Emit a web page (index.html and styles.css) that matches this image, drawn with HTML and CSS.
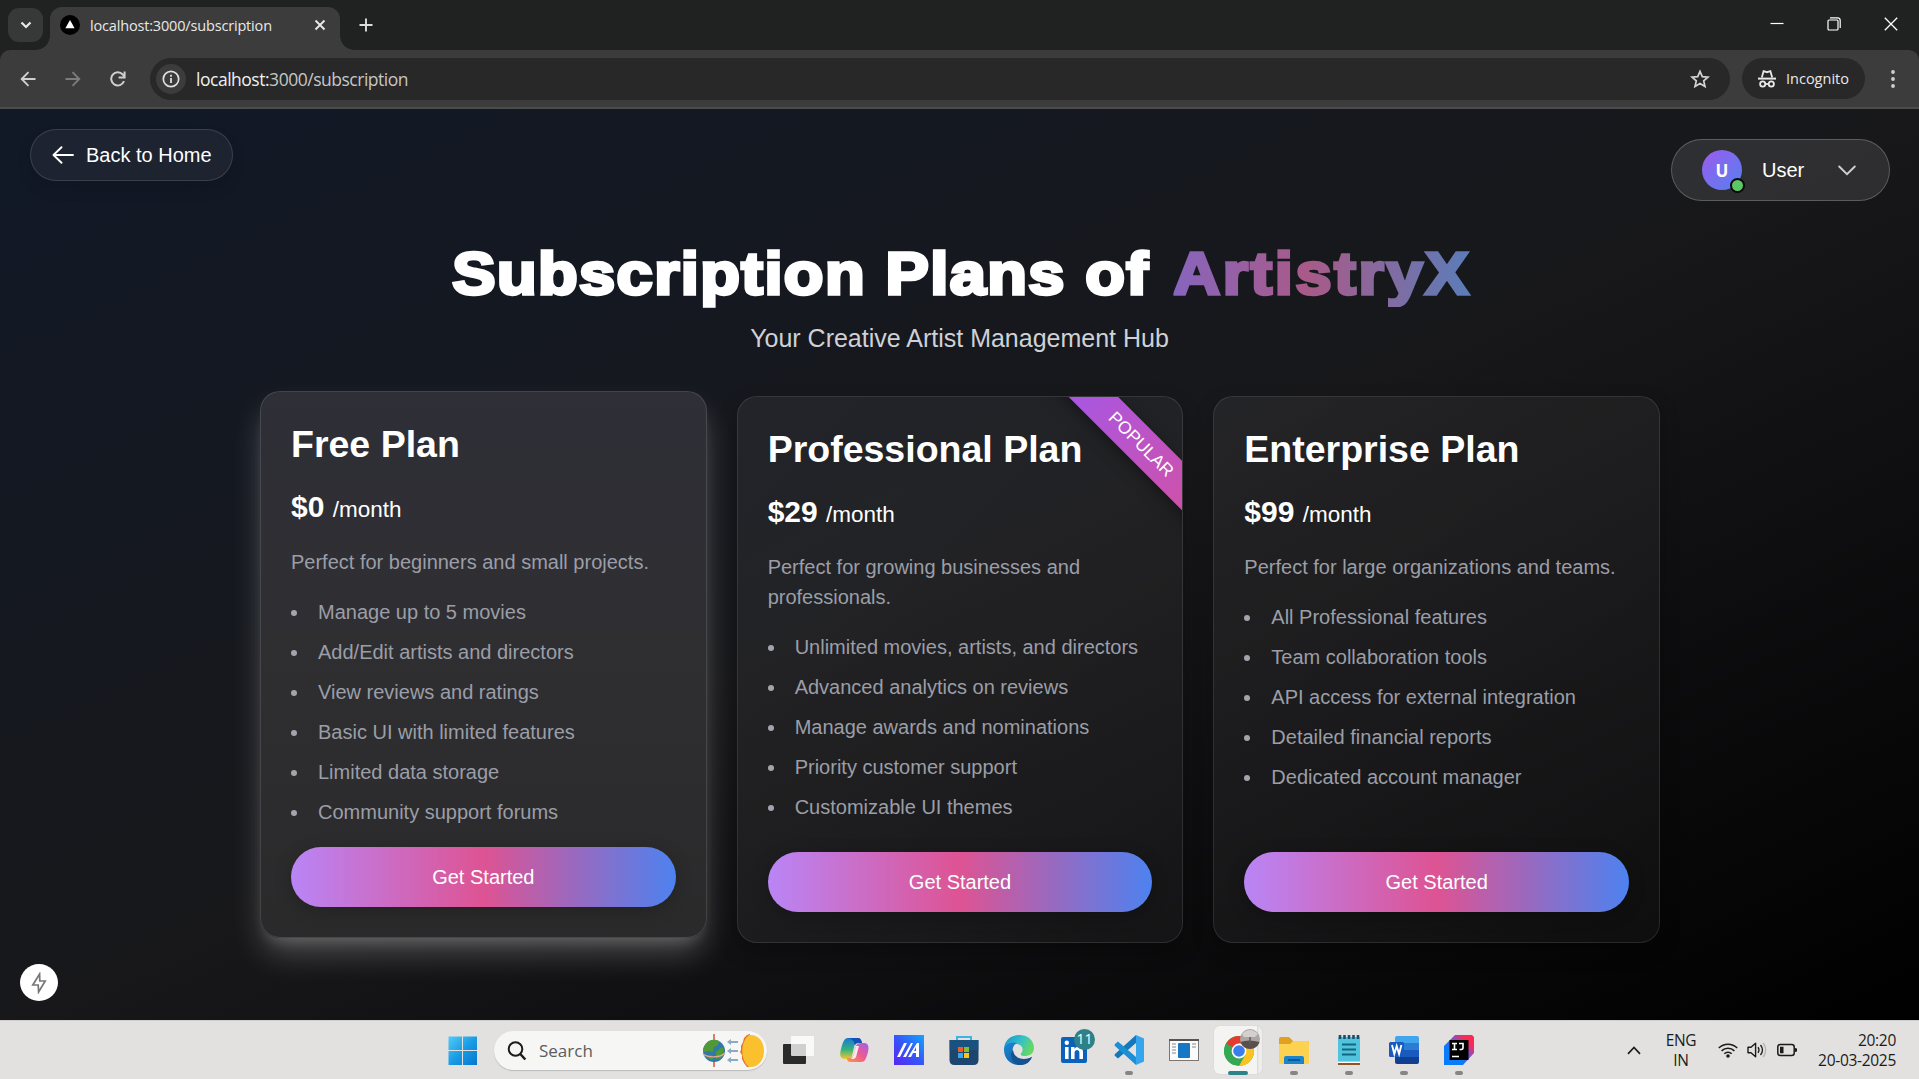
FILE: index.html
```html
<!DOCTYPE html>
<html lang="en">
<head>
<meta charset="utf-8">
<title>Subscription Plans of ArtistryX</title>
<link rel="stylesheet" href="styles.css">
</head>
<body>
<header class="tabstrip">
  <div class="tab-search"><svg width="12" height="8" viewBox="0 0 12 8"><path d="M1.5 1.5 6 6l4.500-4.500" fill="none" stroke="#e8e8e8" stroke-width="2.200"/></svg></div>
  <div class="tab">
    <svg class="favicon" width="20" height="20" viewBox="0 0 20 20"><circle cx="10" cy="10" r="10" fill="#000"/><path d="M10 5l4.600 8.300H5.400z" fill="#fff"/></svg>
    <span class="tab-title">localhost:3000/subscription</span>
    <svg class="tab-close" width="12" height="12" viewBox="0 0 12 12"><path d="M1.500 1.500l9 9M10.500 1.500l-9 9" stroke="#e8e8e8" stroke-width="1.900"/></svg>
  </div>
  <svg class="new-tab" width="14" height="14" viewBox="0 0 14 14"><path d="M7 .5v13M.5 7h13" stroke="#dcdcdc" stroke-width="1.900"/></svg>
  <div class="window-controls">
    <svg width="14" height="14" viewBox="0 0 14 14"><path d="M.5 6.500h13" stroke="#fff" stroke-width="1.200"/></svg>
    <svg width="14" height="14" viewBox="0 0 14 14"><rect x="1" y="3" width="10" height="10" rx="1" fill="none" stroke="#fff" stroke-width="1.200"/><path d="M3 .8h7.500a2.700 2.700 0 0 1 2.700 2.700V11" fill="none" stroke="#fff" stroke-width="1.200"/></svg>
    <svg width="14" height="14" viewBox="0 0 14 14"><path d="M.8.8l12.400 12.400M13.200.8L.8 13.200" stroke="#fff" stroke-width="1.300"/></svg>
  </div>
</header>
<nav class="toolbar">
  <svg class="nav-icon" width="16" height="16" viewBox="0 0 16 16"><path d="M15.500 8H2M8.500 1.200L1.700 8l6.800 6.800" fill="none" stroke="#cfcfcf" stroke-width="1.900"/></svg>
  <svg class="nav-icon" width="16" height="16" viewBox="0 0 16 16"><path d="M.5 8H14M7.500 1.200L14.300 8l-6.800 6.800" fill="none" stroke="#7c7c7c" stroke-width="1.900"/></svg>
  <svg class="nav-icon" width="16" height="16" viewBox="0 0 16 16"><path d="M14 10.200A6.600 6.600 0 1 1 12.800 3.500L14.500 5.500" fill="none" stroke="#cfcfcf" stroke-width="2"/><path d="M14.600.5v6H8.600" fill="none" stroke="#cfcfcf" stroke-width="2"/></svg>
  <div class="omnibox">
    <span class="site-info"><svg width="18" height="18" viewBox="0 0 18 18"><circle cx="9" cy="9" r="7.700" fill="none" stroke="#e0e0e0" stroke-width="1.700"/><path d="M9 8v5M9 4.800v2" stroke="#e0e0e0" stroke-width="1.800"/></svg></span>
    <span class="url"><b>localhost:</b>3000/subscription</span>
    <svg class="star" width="20" height="20" viewBox="0 0 20 20"><path d="M10 2.300l2.300 5.300 5.700.5-4.300 3.800 1.300 5.700-5-3-5 3 1.300-5.700L2 8.100l5.700-.5z" fill="none" stroke="#d4d4d4" stroke-width="1.700"/></svg>
  </div>
  <div class="incognito">
    <svg width="18" height="18" viewBox="0 0 18 18"><path d="M3.800 7.500L5.600 1.200 9 2.200l3.400-1L14.200 7.500" fill="none" stroke="#e8e8e8" stroke-width="1.800"/><path d="M0 8.600h18" stroke="#e8e8e8" stroke-width="2"/><g fill="none" stroke="#e8e8e8" stroke-width="1.800"><circle cx="4.700" cy="14" r="2.600"/><circle cx="13.300" cy="14" r="2.600"/><path d="M7.200 14h3.600"/></g></svg>
    <span>Incognito</span>
  </div>
  <svg class="kebab" width="4" height="18" viewBox="0 0 4 18"><g fill="#d0d0d0"><circle cx="2" cy="2" r="1.900"/><circle cx="2" cy="9" r="1.900"/><circle cx="2" cy="16" r="1.900"/></g></svg>
</nav>

<main class="page">
  <div class="page-bar">
    <a class="back"><svg width="22" height="18" viewBox="0 0 22 18"><path d="M21 9H2M9.500 1.200L1.500 9l8 7.800" fill="none" stroke="#fff" stroke-width="1.900" stroke-linecap="round" stroke-linejoin="round"/></svg>Back to Home</a>
    <div class="user">
      <span class="avatar">U<i class="online"></i></span>
      <span class="user-name">User</span>
      <svg width="18" height="11" viewBox="0 0 18 11"><path d="M1.200 1.500L9 9.200l7.800-7.700" fill="none" stroke="#d0d0d2" stroke-width="1.900" stroke-linecap="round"/></svg>
    </div>
  </div>
  <h1>Subscription Plans of <span class="brand">ArtistryX</span></h1>
  <p class="tagline">Your Creative Artist Management Hub</p>

  <section class="plans">
    <article class="plan plan-active">
      <h2>Free Plan</h2>
      <p class="price">$0 <span>/month</span></p>
      <p class="about">Perfect for beginners and small projects.</p>
      <ul>
        <li>Manage up to 5 movies</li><li>Add/Edit artists and directors</li><li>View reviews and ratings</li><li>Basic UI with limited features</li><li>Limited data storage</li><li>Community support forums</li>
      </ul>
      <button>Get Started</button>
    </article>
    <article class="plan">
      <div class="ribbon-clip"><span class="ribbon">POPULAR</span></div>
      <h2>Professional Plan</h2>
      <p class="price">$29 <span>/month</span></p>
      <p class="about">Perfect for growing businesses and professionals.</p>
      <ul>
        <li>Unlimited movies, artists, and directors</li><li>Advanced analytics on reviews</li><li>Manage awards and nominations</li><li>Priority customer support</li><li>Customizable UI themes</li>
      </ul>
      <button>Get Started</button>
    </article>
    <article class="plan">
      <h2>Enterprise Plan</h2>
      <p class="price">$99 <span>/month</span></p>
      <p class="about">Perfect for large organizations and teams.</p>
      <ul>
        <li>All Professional features</li><li>Team collaboration tools</li><li>API access for external integration</li><li>Detailed financial reports</li><li>Dedicated account manager</li>
      </ul>
      <button>Get Started</button>
    </article>
  </section>
  <div class="dev-badge"><svg width="16" height="22" viewBox="0 0 16 22"><path d="M8.600 2L1.800 13h5.400l.4 7L14.200 9H8.800z" fill="none" stroke="#777" stroke-width="1.700"/></svg></div>
</main>

<footer class="taskbar">
  <svg class="start" width="30" height="30" viewBox="0 0 30 30"><defs><linearGradient id="win" gradientUnits="userSpaceOnUse" x1="0" y1="0" x2="30" y2="30"><stop offset="0" stop-color="#55cdf8"/><stop offset=".5" stop-color="#199be4"/><stop offset="1" stop-color="#0673cf"/></linearGradient></defs><path fill="url(#win)" d="M.5.5H14v13.500H.5zM15 .5h14v13.500H15zM.5 15H14v14H.5zM15 15h14v14H15z"/></svg>
  <div class="search">
    <svg width="20" height="20" viewBox="0 0 20 20"><circle cx="8.500" cy="8" r="6.800" fill="none" stroke="#1d1d1d" stroke-width="2"/><path d="M13.300 13l5 5.500" stroke="#1d1d1d" stroke-width="2.500"/></svg>
    <span>Search</span>
    <svg class="doodle" width="64" height="36" viewBox="0 0 64 36">
      <path d="M12 1v33" stroke="#d6604a" stroke-width="1.600"/><circle cx="12" cy="18" r="11" fill="#2f78a8"/><path d="M4 11c3-5 9-5 13-3l-1 4-4 2-1 5-5-1-5 1c0-3 1-6 3-8zM14 19l6-5c3 3 2 8-1 11l-5 1zM4 23l6-1 1 5c-3 0-5-2-7-4z" fill="#4f9a34"/><path d="M1 21c5 4 17 4 22-1" fill="none" stroke="#e9a58f" stroke-width="1.400"/>
      <g fill="#8ba8c4"><path d="M25 9l4-3v2h7v2h-7v2zM25 18l4-3v2h7v2h-7v2zM25 27l4-3v2h7v2h-7v2z"/></g>
      <path d="M45 2l-3 3-1 4-2 4 0 4-1 2 2 3 0 4 2 4 3 4h3V1z" fill="#e4702a"/><path d="M47 2c20-2 20 34 0 32C38 27 38 9 47 2z" fill="#fbc02d"/>
    </svg>
  </div>
  <div class="apps">
    <div class="app"><svg width="44" height="48" viewBox="0 0 44 48"><rect x="6" y="18" width="23" height="20" rx="1" fill="#2a2a2a"/><rect x="14" y="10" width="23" height="20" rx="1" fill="#fff" fill-opacity=".78"/></svg></div>
    <div class="app"><svg width="44" height="48" viewBox="0 0 44 48"><defs><linearGradient id="cpa" x1="0" y1="0" x2="0" y2="1"><stop offset="0" stop-color="#1879d8"/><stop offset=".55" stop-color="#35b37c"/><stop offset="1" stop-color="#f4c62c"/></linearGradient><linearGradient id="cpb" x1="1" y1="0" x2="0" y2="1"><stop offset="0" stop-color="#a25fe6"/><stop offset=".5" stop-color="#ed5a92"/><stop offset="1" stop-color="#fb9a3c"/></linearGradient></defs><path d="M16 12h10q3 0 4 5h-4q-3 0-4 4l-2 9q-1 3-3 3h-4c-6 0-5-6-4-10 2-7 3-11 7-11z" fill="url(#cpa)"/><path d="M29 17h3c5 0 5 5 4 9-2 7-3 10-7 10H18q-3 0-3-4h3q3 0 4-4l2-8q1-3 5-3z" fill="url(#cpb)"/><path d="M16 12h10q3 0 4 5h-4q-2 0-3 2-1-6-7-7z" fill="#1451b5"/><path d="M24 20h3l-3 11q-1 2-3 2h-2q2-1 3-5z" fill="#fff" opacity=".85"/></svg></div>
    <div class="app"><svg width="44" height="48" viewBox="0 0 44 48"><defs><linearGradient id="asus" x1="0" y1="1" x2="1" y2="0"><stop offset="0" stop-color="#5a25f0"/><stop offset=".5" stop-color="#3557f8"/><stop offset="1" stop-color="#12a5ff"/></linearGradient></defs><path d="M7 9h30v30H7z" fill="url(#asus)"/><path d="M10 31l7-14h3l-7 14zM16 31l8-14h2l-7 14zM21 31l9-14h2v14h-3v-4h-3l-2 4zM27 25h2v-4z" fill="#fff"/></svg></div>
    <div class="app"><svg width="44" height="48" viewBox="0 0 44 48"><path d="M15 15v-4h14v4" fill="none" stroke="#3db5e4" stroke-width="2"/><path d="M7.500 14h29v20q0 5-5 5h-19q-5 0-5-5z" fill="#1d466f"/><path d="M7.500 14h29v10h-29z" fill="#175a8b" opacity=".6"/><path d="M16 21h5v5h-5z" fill="#f05a2c"/><path d="M22 21h5v5h-5z" fill="#86bc2f"/><path d="M16 27h5v5h-5z" fill="#35a8e8"/><path d="M22 27h5v5h-5z" fill="#fbc21b"/></svg></div>
    <div class="app"><svg width="44" height="48" viewBox="0 0 44 48"><defs><linearGradient id="eda" x1="0" y1="0" x2="1" y2=".4"><stop offset="0" stop-color="#168fd4"/><stop offset=".6" stop-color="#35c2c6"/><stop offset="1" stop-color="#65d864"/></linearGradient><linearGradient id="edb" x1="0" y1="0" x2="1" y2="1"><stop offset="0" stop-color="#1a8ad6"/><stop offset="1" stop-color="#134b92"/></linearGradient></defs><path d="M7 23C8 4 37 5 37 22c0 6-5 8-9 8-5 0-5-2-3-4 2-4-1-8-6-8-6 0-11 3-12 8z" fill="url(#eda)"/><path d="M7 24c0-6 8-9 13-7-4 2-5 6-4 10 2 6 10 9 19 4-3 6-8 8-13 8-9 0-15-7-15-15z" fill="url(#edb)"/><path d="M16 24c-5 5 0 15 8 15 5 0 9-3 11-8-8 4-18 2-19-7z" fill="#145291"/></svg></div>
    <div class="app linkedin"><svg width="44" height="48" viewBox="0 0 44 48"><rect x="9" y="11" width="26" height="26" rx="2" fill="#0c61bb"/><circle cx="14.800" cy="16.800" r="2.200" fill="#fff"/><path d="M13 21h3.600v12H13zM19 21h3.400v1.800c2-3.300 8.600-3 8.600 3.200v7h-3.600v-6.500c0-3.500-4.800-3.400-4.800 0V33H19z" fill="#fff"/></svg><span class="badge">11</span></div>
    <div class="app open"><svg width="44" height="48" viewBox="0 0 44 48"><path d="M29 9v8L11 32.500 8 30q-1-1 0-2z" fill="#1478ba"/><path d="M29 39v-8L11 15.500 8 18q-1 1 0 2z" fill="#1c8fd4"/><path d="M29 9l8 3.500v23L29 39z" fill="#35a6ed"/></svg></div>
    <div class="app"><svg width="44" height="48" viewBox="0 0 44 48"><rect x="7.500" y="13.500" width="29" height="21" fill="#fbfbfb" stroke="#777" /><path d="M7 14h30" stroke="#555" stroke-width="2"/><rect x="16" y="17" width="12" height="15" rx="1" fill="#1678c4"/><path d="M10 18h4M10 21h4M10 24h4M10 27h4M30 18h4M30 21h4" stroke="#888"/></svg></div>
    <div class="app current"><svg width="44" height="48" viewBox="0 0 44 48"><circle cx="22" cy="25" r="15" fill="#35a853"/><path d="M22 25L9 17.500a15 15 0 0 1 26 0z" fill="#e33b2e"/><path d="M22 17.500h13A15 15 0 0 1 22 40l6.500-11.500z" fill="#fcc31e"/><path d="M9 17.500L15.500 28.500 22 32l-5 7A15 15 0 0 1 9 17.500z" fill="#35a853"/><circle cx="22" cy="25" r="7.400" fill="#fff"/><circle cx="22" cy="25" r="5.800" fill="#3b7ded"/><circle cx="33" cy="13" r="10" fill="#aaa7a6"/><path d="M23.500 16q8-3 19 0a10 10 0 0 1-19 0z" fill="#59504c"/><path d="M25 8q8-8 16 0l-3 3H27z" fill="#d3d0ce"/><path d="M33 11v7" stroke="#645b58" stroke-width="1.500"/></svg></div>
    <div class="app open"><svg width="44" height="48" viewBox="0 0 44 48"><path d="M7 13q0-2 2-2h8l4 4h14q2 0 2 2v20H7z" fill="#e0a020"/><path d="M7 18h11l3-3h14q2 0 2 2v19q0 2-2 2H9q-2 0-2-2z" fill="#fdd250"/><path d="M12 38v-6q0-2 2-2h16q2 0 2 2v6z" fill="#1a85cc"/><path d="M16 34h12" stroke="#0b599a" stroke-width="2"/></svg></div>
    <div class="app open"><svg width="44" height="48" viewBox="0 0 44 48"><path d="M11 34h22v5H11z" fill="#8b5524"/><rect x="11" y="11" width="22" height="26" rx="1" fill="#4fc4dc"/><path d="M13 9v4M17.500 9v4M22 9v4M26.500 9v4M31 9v4" stroke="#16506e" stroke-width="2.600"/><path d="M15 18.500h14M15 23.500h14M15 28.500h14" stroke="#15657f" stroke-width="1.800"/><path d="M11 36.300h22" stroke="#fff" stroke-width="1.400"/></svg></div>
    <div class="app open"><svg width="44" height="48" viewBox="0 0 44 48"><path d="M13 12q0-2 2-2h20q2 0 2 2v6H13z" fill="#41a5ee"/><path d="M13 17h24v7H13z" fill="#2b7cd3"/><path d="M13 24h24v7H13z" fill="#185abd"/><path d="M13 31h24v5q0 2-2 2H15q-2 0-2-2z" fill="#103f91"/><rect x="7" y="16" width="15" height="15" rx="1.500" fill="#185abd"/><path d="M10 19l2.300 9 2.400-8 2.400 8L19.400 19" fill="none" stroke="#fff" stroke-width="1.900"/></svg></div>
    <div class="app open"><svg width="44" height="48" viewBox="0 0 44 48"><defs><linearGradient id="ij" x1="0" y1="1" x2="1" y2="0"><stop offset=".35" stop-color="#087cfa"/><stop offset=".55" stop-color="#6b57d8"/><stop offset=".8" stop-color="#fe2857"/></linearGradient></defs><path d="M7 20L18 9h17l2 2v16L26 39H7z" fill="url(#ij)"/><rect x="12.500" y="14" width="19" height="20" fill="#000"/><path d="M15 17.500h5M17.500 17.500v6M15 23.500h5M22 17.500h4v4.500q0 1.700-3.500 1.500M15 30.500h7" fill="none" stroke="#fff" stroke-width="1.600"/></svg></div>
  </div>
  <div class="tray">
    <svg width="14" height="9" viewBox="0 0 14 9"><path d="M1 7.800L7 1.500l6 6.300" fill="none" stroke="#1b1b1b" stroke-width="1.700"/></svg>
    <div class="lang">ENG<br>IN</div>
    <svg class="wifi" width="20" height="16" viewBox="0 0 20 16"><g fill="none" stroke="#1b1b1b" stroke-width="1.500"><path d="M.8 6a13 13 0 0 1 18.400 0M3.600 8.900a9 9 0 0 1 12.800 0M6.300 11.700a5.200 5.200 0 0 1 7.400 0"/></g><circle cx="10" cy="14" r="1.800" fill="#1b1b1b"/></svg>
    <svg class="volume" width="20" height="16" viewBox="0 0 20 16"><path d="M1 5.200h3L8.600 1.300v13.400L4 10.800H1z" fill="none" stroke="#1b1b1b" stroke-width="1.400" stroke-linejoin="round"/><path d="M11 5.200q2 2.800 0 5.600M13.500 3q4 5 0 10" fill="none" stroke="#1b1b1b" stroke-width="1.300"/><path d="M16.200 1q5 7 0 14" fill="none" stroke="#b5b5b5" stroke-width="1.300"/></svg>
    <svg class="battery" width="21" height="14" viewBox="0 0 21 14"><rect x=".8" y="1.500" width="16.400" height="11" rx="2.500" fill="none" stroke="#1b1b1b" stroke-width="1.500"/><path d="M3 3.700h3.500v6.600H3zM18 5l2 .5v3L18 9z" fill="#1b1b1b"/></svg>
    <div class="clock">20:20<br>20-03-2025</div>
  </div>
</footer>
</body>
</html>
```

FILE: styles.css
```css
* { box-sizing: border-box; }
body { margin: 0; width: 1919px; height: 1079px; overflow: hidden; display: flex; flex-direction: column; background: #202221; font-family: "Liberation Sans", Arial, sans-serif; }
svg { display: block; flex: none; }
h1, h2, p, ul { margin: 0; padding: 0; }

/* Browser window */
.tabstrip, .toolbar, .taskbar { font-family: "Open Sans", "Noto Sans", sans-serif; }
.tabstrip { height: 50px; flex: none; display: flex; align-items: flex-start; background: #202221; padding-left: 8px; }
.tab-search { width: 35px; height: 34px; margin-top: 8px; border-radius: 11px; background: #373838; display: grid; place-items: center; }
.tab { position: relative; width: 290px; height: 43px; margin: 7px 0 0 7px; padding: 0 14px 7px 10px; border-radius: 12px 12px 0 0; background: #3c3c3c; display: flex; align-items: center; }
.tab::before, .tab::after { content: ""; position: absolute; bottom: 0; width: 14px; height: 14px; }
.tab::before { left: -14px; background: radial-gradient(circle at 0 0, transparent 13.500px, #3c3c3c 14px); }
.tab::after { right: -14px; background: radial-gradient(circle at 100% 0, transparent 13.500px, #3c3c3c 14px); }
.tab-title { margin-left: 10px; font-size: 14.500px; color: #e8e8e8; letter-spacing: -.17px; white-space: nowrap; }
.tab-close { margin-left: auto; }
.new-tab { margin: 18px 0 0 19px; }
.window-controls { margin: 17px 21px 0 auto; display: flex; gap: 43px; }
.toolbar { height: 59px; flex: none; display: flex; align-items: center; background: #3c3c3c; border-bottom: 2px solid #4b4b4b; padding: 0 24px 0 20px; border-radius: 10px 10px 0 0; }
.nav-icon { margin-right: 29px; }
.omnibox { flex: 1; height: 42px; border-radius: 21px; background: #282828; display: flex; align-items: center; padding: 0 20px 0 6px; margin-left: -5px; }
.site-info { width: 30px; height: 30px; border-radius: 50%; background: #3c3c3c; display: grid; place-items: center; }
.url { margin-left: 10px; font-size: 17.500px; color: #c6c6c6; letter-spacing: -.48px; }
.url b { font-weight: 400; color: #efefef; }
.star { margin-left: auto; }
.incognito { width: 123px; height: 41px; margin: 0 26px 0 12px; border-radius: 21px; background: #282828; display: flex; align-items: center; padding-left: 16px; gap: 10px; font-size: 14.500px; color: #e8e8e8; }

/* Subscription page */
.page { position: relative; height: 911px; flex: none; background: linear-gradient(to bottom right, #111827, #18181b 50%, #000); color: #fff; }
.page-bar { height: 92px; padding: 20px 29px 0 30px; display: flex; justify-content: space-between; align-items: flex-start; }
.back { width: 203px; height: 52px; border: 1px solid rgba(255,255,255,.13); border-radius: 26px; background: rgba(255,255,255,.05); display: flex; align-items: center; gap: 12px; padding-left: 21px; font-size: 20px; box-shadow: 0 8px 15px rgba(0,0,0,.1); }
.user { width: 219px; height: 62px; margin-top: 10px; border: 1px solid rgba(255,255,255,.22); border-radius: 31px; background: rgba(255,255,255,.1); display: flex; align-items: center; padding: 0 33px 0 30px; font-size: 20px; }
.avatar { position: relative; width: 40px; height: 40px; border-radius: 50%; background: linear-gradient(135deg, #9b5cf0, #5580ee); display: grid; place-items: center; font: 700 17px "Open Sans", sans-serif; }
.online { position: absolute; right: -3px; bottom: -3px; width: 15px; height: 15px; border: 2px solid #0a0a0a; border-radius: 50%; background: #5cc864; }
.user-name { margin: 0 auto 0 20px; }
h1 { width: 1400px; height: 107px; margin: 0 auto; padding: 28px 0 0 3px; text-align: center; white-space: nowrap; font: 700 59px/90px "Liberation Sans", Arial, sans-serif; letter-spacing: 1.300px; -webkit-text-stroke: 3.400px #fff; transform: scaleX(1.1); }
.brand { margin-left: 4px; letter-spacing: 2.400px; background: linear-gradient(90deg, #8765bd, #a95a88 45%, #5a7dba); -webkit-background-clip: text; background-clip: text; color: transparent; -webkit-text-stroke-color: transparent; }
.tagline { text-align: center; font-size: 25px; line-height: 38px; height: 88px; padding-top: 11px; color: #cfd1d6; }
.plans { width: 1400px; margin: 0 0 0 260px; display: grid; grid-template-columns: repeat(3, 1fr); gap: 30px; height: 547px; }
.plan { position: relative; padding: 30px; border: 1px solid rgba(255,255,255,.1); border-radius: 20px; background: linear-gradient(135deg, rgba(255,255,255,.055), rgba(255,255,255,.04)); box-shadow: 0 8px 20px rgba(0,0,0,.25); display: flex; flex-direction: column; }
.plan-active { transform: translateY(-5px); background: linear-gradient(180deg, #2e2f37, #2f2f32 45%, #2a2a2b); border-color: rgba(255,255,255,.12); box-shadow: 0 18px 32px -4px rgba(255,255,255,.25), 0 9px 14px -6px rgba(255,255,255,.16); }
h2 { font-size: 37.500px; line-height: 45px; white-space: nowrap; }
.price { margin-top: 20px; font-size: 30px; line-height: 40px; height: 40px; font-weight: 700; }
.price span { font-size: 22.500px; font-weight: 400; }
.about { margin-top: 20px; font-size: 20px; line-height: 30px; color: #9b9ea7; }
ul { list-style: none; margin: 20px 0; display: grid; gap: 10px; font-size: 20px; line-height: 30px; color: #9b9ea7; }
li { display: flex; align-items: center; white-space: nowrap; }
li::before { content: ""; width: 6px; height: 6px; margin: 2px 21px 0 0; border-radius: 50%; background: #a2a5ad; }
button { height: 60px; flex: none; margin: auto 0 0; border: 0; border-radius: 30px; background: linear-gradient(90deg, #b985f6, #de5393 50%, #4d82f0); color: #fff; font: 20px "Liberation Sans", Arial, sans-serif; box-shadow: 0 4px 18px rgba(0,0,0,.22); }
.ribbon-clip { position: absolute; inset: 0; overflow: hidden; border-radius: 19px 19px 0 0; pointer-events: none; }
.ribbon { position: absolute; right: -79px; top: 30px; width: 240px; height: 35px; transform: rotate(45deg); display: grid; place-items: center; background: linear-gradient(90deg, #a058f0, #d8509a); font-size: 17.500px; box-shadow: 0 4px 15px rgba(0,0,0,.35); }
.dev-badge { position: absolute; left: 20px; bottom: 19px; width: 38px; height: 37px; border-radius: 50%; background: #fff; display: grid; place-items: center; }

/* Windows taskbar */
.taskbar { height: 59px; flex: none; background: #e2e1df; border-top: 1px solid #cfcecc; display: flex; align-items: flex-start; padding-left: 448px; color: #1b1b1b; }
.start { margin-top: 15px; }
.search { width: 273px; height: 39px; margin: 10px 0 0 16px; border-radius: 20px; background: #f6f6f5; box-shadow: 0 1px 1px #bbb; display: flex; align-items: center; padding-left: 13px; gap: 12px; font-size: 17px; color: #5c5c5c; }
.doodle { margin-left: auto; margin-right: 1px; }
.apps { display: flex; margin: 5px 0 0 4px; }
.app { position: relative; width: 55px; height: 50px; display: flex; justify-content: center; }
.open::after, .current::after { content: ""; position: absolute; left: 24px; bottom: 1px; width: 8px; height: 4px; border-radius: 2px; background: #858585; }
.current::before { content: ""; position: absolute; left: 3px; top: 0; width: 48px; height: 48px; border-radius: 6px; background: linear-gradient(90deg, #f4f4f3 43px, #d5d5d4 43px, #eeeeed 45px); box-shadow: 0 0 1px #bbb; }
.current svg { position: relative; }
.current::after { left: 17px; width: 20px; background: #2d8189; }
.badge { position: absolute; left: 28px; top: 3px; width: 21px; height: 21px; border-radius: 50%; background: #2d8189; color: #fff; font-size: 14px; line-height: 20px; text-align: center; }
.tray { margin: 0 23px 0 auto; height: 58px; display: flex; align-items: center; font-size: 15.500px; line-height: 20px; }
.lang { width: 42px; margin-left: 19px; text-align: center; letter-spacing: -.3px; }
.wifi { margin-left: 16px; }
.volume { margin-left: 9px; }
.battery { margin-left: 10px; }
.clock { width: 98px; text-align: right; white-space: nowrap; letter-spacing: -.3px; }
```
